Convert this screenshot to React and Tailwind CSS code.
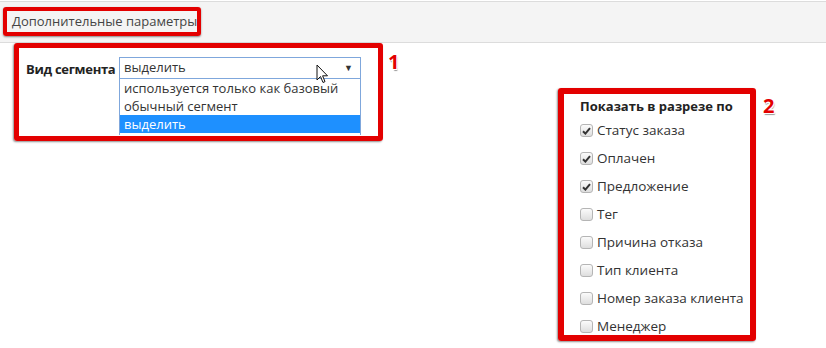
import React from 'react';

const options = [
  "используется только как базовый",
  "обычный сегмент",
  "выделить",
  "используется только как базовый",
];

const fields = [
  { label: "Статус заказа", checked: true },
  { label: "Оплачен", checked: true },
  { label: "Предложение", checked: true },
  { label: "Тег", checked: false },
  { label: "Причина отказа", checked: false },
  { label: "Тип клиента", checked: false },
  { label: "Номер заказа клиента", checked: false },
  { label: "Менеджер", checked: false },
];

function Checkbox({ checked }) {
  return (
    <span className="flex h-[13px] w-[13px] items-center justify-center rounded-[3px] border border-[#b5b5b5] bg-gradient-to-b from-[#fbfbfb] to-[#dedede]">
      {checked && (
        <svg width="9" height="8" viewBox="0 0 9 8">
          <path d="M1 4.2 L3.4 6.6 L8 1.2" stroke="#333" strokeWidth="2" fill="none" />
        </svg>
      )}
    </span>
  );
}

function Marker({ n }) {
  return (
    <span className="text-[20px] font-bold leading-none text-[#e30000] [text-shadow:1px_1px_0_#fff,-1px_-1px_0_#fff,1px_-1px_0_#fff,-1px_1px_0_#fff,1px_2px_1px_#999]">
      {n}
    </span>
  );
}

export default function App() {
  return (
    <div className="relative h-[348px] w-[826px] overflow-hidden bg-white font-['Open_Sans',sans-serif] text-[13px] text-[#333]">
      {/* header bar */}
      <div className="mt-px flex h-[42px] items-center border-y border-[#dcdcdc] bg-[#f4f4f4] pl-[12px]">
        <span className="text-[13px] text-[#444]">Дополнительные параметры</span>
      </div>

      <div className="flex">
        {/* segment type */}
        <div className="flex items-start pl-[26px] pt-[14px]">
          <span className="mt-[3px] w-[93px] font-bold tracking-[-0.3px] text-[#222]">Вид сегмента</span>
          <div className="w-[242px]">
            <div className="flex h-[22px] items-center justify-between border border-[#7fa7dc] pl-[4px] pr-[7px]">
              <span>выделить</span>
              <span className="text-[9px] text-[#333]">▼</span>
            </div>
            <div className="h-[56px] overflow-hidden border-x border-[#7fa7dc]">
              {options.map((o, i) => (
                <div
                  key={i}
                  className={`h-[18px] pl-[4px] leading-[18px] ${i === 2 ? 'bg-[#1e90ff] text-white' : ''}`}
                >
                  {o}
                </div>
              ))}
            </div>
          </div>
        </div>

        {/* show by */}
        <div className="ml-[197px] pt-[54px]">
          <div className="pl-[22px] text-[13px] font-bold text-[#222]">Показать в разрезе по</div>
          <div className="mt-[5px] flex flex-col gap-[10px] pl-[22px]">
            {fields.map((f) => (
              <label key={f.label} className="flex h-[18px] items-center gap-[4px]">
                <Checkbox checked={f.checked} />
                <span className="text-[13.5px] text-[#333]">{f.label}</span>
              </label>
            ))}
          </div>
        </div>
      </div>

      {/* annotation frames */}
      <div className="absolute left-[3px] top-[7px] h-[29px] w-[198px] rounded-[3px] border-[4px] border-[#e30000] shadow-[0_1px_2px_rgba(0,0,0,0.45)]" />
      <div className="absolute left-[14px] top-[43px] h-[98px] w-[369px] rounded-[3px] border-[5px] border-[#e30000] shadow-[-1px_1px_2px_rgba(0,0,0,0.45)]" />
      <div className="absolute left-[558px] top-[88px] h-[253px] w-[198px] rounded-[3px] border-[6px] border-[#e30000] shadow-[-1px_1px_2px_rgba(0,0,0,0.45)]" />

      <div className="absolute left-[388px] top-[52px]"><Marker n="1" /></div>
      <div className="absolute left-[763px] top-[96px]"><Marker n="2" /></div>

      {/* mouse pointer */}
      <svg className="absolute left-[316px] top-[64px]" width="14" height="22" viewBox="0 0 14 22">
        <path d="M1 1 L1 16 L4.5 12.5 L7 18.5 L9 17.6 L6.6 11.8 L11.5 11.8 Z" fill="#fff" stroke="#111" strokeWidth="1" strokeLinejoin="round" />
      </svg>
    </div>
  );
}
